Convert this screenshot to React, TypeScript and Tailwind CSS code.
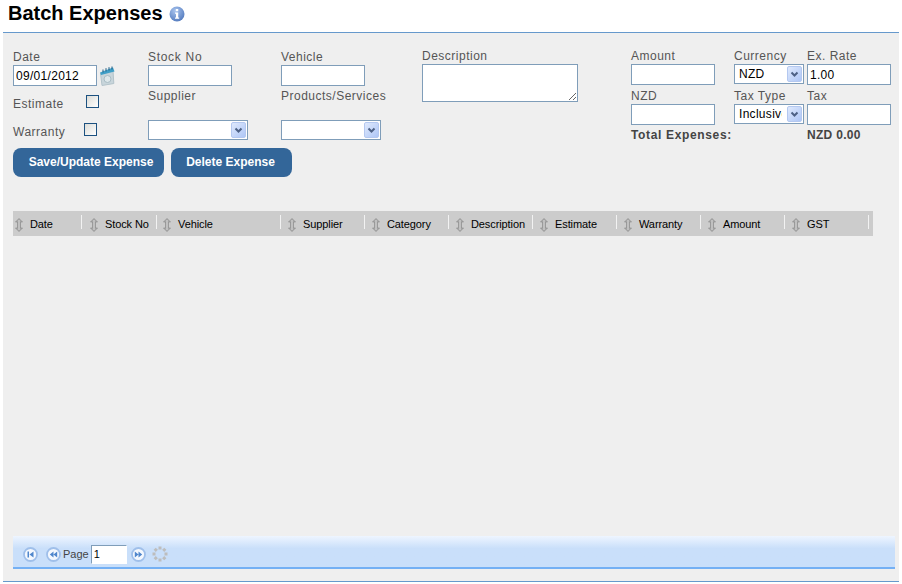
import React from 'react';

const font = "font-['Liberation_Sans',Arial,sans-serif]";
const label = 'block h-4 text-[12px] leading-4 tracking-[0.5px] text-[#555555] whitespace-nowrap';
const box = 'block h-[21px] w-[84px] border border-[#7f9db9] bg-white px-[2px] text-[12px] tracking-[0.3px] text-black outline-none';

const columns = [
  { name: 'Date', width: 'w-[69px]', inset: 'pl-[2px]' },
  { name: 'Stock No', width: 'w-[75px]', inset: 'pl-[8px]' },
  { name: 'Vehicle', width: 'w-[124px]', inset: 'pl-[6px]' },
  { name: 'Supplier', width: 'w-[84px]', inset: 'pl-[7px]' },
  { name: 'Category', width: 'w-[84px]', inset: 'pl-[7px]' },
  { name: 'Description', width: 'w-[84px]', inset: 'pl-[7px]' },
  { name: 'Estimate', width: 'w-[84px]', inset: 'pl-[7px]' },
  { name: 'Warranty', width: 'w-[84px]', inset: 'pl-[7px]' },
  { name: 'Amount', width: 'w-[84px]', inset: 'pl-[7px]' },
  { name: 'GST', width: 'w-[84px]', inset: 'pl-[7px]' },
];

const SelectBox = ({ value, width }: { value?: string; width: string }) => (
  <div className={`relative h-5 ${width}`}>
    <select
      defaultValue={value}
      className="block h-full w-full appearance-none rounded-none border border-[#7f9db9] bg-white pl-1 pr-[21px] text-[12px] tracking-[0.3px] text-black outline-none"
    >
      <option value={value ?? ''}>{value ?? ''}</option>
    </select>
    <span className="absolute right-[2px] top-[2px] flex h-4 w-[15px] items-center justify-center rounded-[2px] border border-[#b4c8f0] bg-gradient-to-br from-[#dfe9fc] to-[#aec6f6]">
      <svg width="9" height="7" viewBox="0 0 9 7">
        <path d="M1.5 1.5 4.5 4.5 7.5 1.5" fill="none" stroke="#4d6185" strokeWidth="2" />
      </svg>
    </span>
  </div>
);

const SortArrows = () => (
  <svg width="8" height="14" viewBox="0 0 8 14" className="shrink-0">
    <path d="M4 0.5 7.5 4H5.5V10H7.5L4 13.5 0.5 10H2.5V4H0.5Z" fill="#a8a8a8" stroke="#8c8c8c" strokeWidth="0.7" />
    <path d="M4 2V12" stroke="#d8d8d8" strokeWidth="1" />
  </svg>
);

const PagerButton = ({ kind }: { kind: 'first' | 'prev' | 'next' }) => (
  <svg width="15" height="15" viewBox="0 0 15 15" className="shrink-0">
    <circle cx="7.5" cy="7.5" r="6.5" fill="#f4f8fe" stroke="#9fbfea" strokeWidth="1.8" />
    {kind === 'first' && <path d="M4.5 4.5h1.5v6H4.5ZM10.5 4.5v6L6.5 7.5Z" fill="#4f86cc" />}
    {kind === 'prev' && <path d="M7.5 4.5v6L3.8 7.5ZM11.2 4.5v6L7.5 7.5Z" fill="#4f86cc" />}
    {kind === 'next' && <path d="M7.5 4.5v6l3.7-3ZM3.8 4.5v6l3.7-3Z" fill="#4f86cc" />}
  </svg>
);

const Spinner = () => (
  <svg width="16" height="16" viewBox="0 0 16 16" className="shrink-0">
    {[0, 45, 90, 135, 180, 225, 270, 315].map((deg) => (
      <rect key={deg} x="6.5" y="0.5" width="3" height="3" fill="#bdbdbd" transform={`rotate(${deg} 8 8)`} />
    ))}
  </svg>
);

const App: React.FC = () => {
  return (
    <div className={`flex h-[584px] w-[902px] flex-col bg-white ${font}`}>
      {/* Title */}
      <div className="flex h-[32px] items-start gap-[6px] pl-2 pt-[1px]">
        <h1 className="text-[20px] font-bold leading-[24px] text-black">Batch Expenses</h1>
        <svg width="16" height="16" viewBox="0 0 16 16" className="mt-[5px]">
          <defs>
            <radialGradient id="info" cx="40%" cy="30%" r="75%">
              <stop offset="0" stopColor="#a9c4ee" />
              <stop offset="1" stopColor="#5179bd" />
            </radialGradient>
          </defs>
          <circle cx="8" cy="8" r="7.5" fill="url(#info)" />
          <rect x="6.8" y="3" width="2.4" height="2.2" fill="#ffffff" />
          <path d="M6 6.5h3.2V11.5H10.2V12.8H6V11.5H7V7.8H6Z" fill="#ffffff" />
        </svg>
      </div>

      {/* Panel */}
      <div className="mx-[3px] mb-[2px] flex flex-1 flex-col border-y border-[#6699cc] bg-[#efefef] pl-[10px] pr-1">
        <div className="flex h-[115px] pt-[15px]">
          <div className="w-[135px] pt-px">
            <label className={label}>Date</label>
            <div className="flex items-start gap-[2px]">
              <input className={box} defaultValue="09/01/2012" readOnly />
              <svg width="16" height="20" viewBox="0 0 16 20" className="mt-px">
                <path d="M1.5 7.5 14 4.5 14.8 17.5 3 19.5Z" fill="#c8d5db" stroke="#b3c3ca" />
                <circle cx="8.5" cy="13" r="3.5" fill="#dde7ea" stroke="#a9bcc4" />
                <path d="M1 6.5 14 1.5 15.5 5.5 2 9Z" fill="#3f9fc7" />
                <path d="M4 6.5V3.5M7 5.5V2.2M10 4.5V1.2M13 3.5V0.5" stroke="#1f5f86" strokeWidth="1" />
              </svg>
            </div>
            <div className="mt-[9px] flex h-[13px] items-center">
              <span className="mt-[4px] w-[73px] text-[12px] tracking-[0.5px] text-[#555555]">Estimate</span>
              <input type="checkbox" className="h-[13px] w-[13px] appearance-none rounded-none border border-[#1c5180] bg-gradient-to-br from-[#dcdcd7] to-white" />
            </div>
            <div className="mt-[15px] flex h-[13px] items-center">
              <span className="mt-[4px] w-[71px] text-[12px] tracking-[0.5px] text-[#555555]">Warranty</span>
              <input type="checkbox" className="h-[13px] w-[13px] appearance-none rounded-none border border-[#1c5180] bg-gradient-to-br from-[#dcdcd7] to-white" />
            </div>
          </div>

          <div className="w-[133px] pt-px">
            <label className={`${label} tracking-[0.7px]`}>Stock No</label>
            <input className={box} />
            <label className={`${label} mt-[2px]`}>Supplier</label>
            <div className="mt-4">
              <SelectBox width="w-[100px]" />
            </div>
          </div>

          <div className="w-[141px] pt-px">
            <label className={label}>Vehicle</label>
            <input className={box} />
            <label className={`${label} mt-[2px]`}>Products/Services</label>
            <div className="mt-4">
              <SelectBox width="w-[100px]" />
            </div>
          </div>

          <div className="w-[209px]">
            <label className={label}>Description</label>
            <textarea className="block h-[38px] w-[156px] border border-[#7f9db9] bg-white text-[12px] outline-none" />
          </div>

          <div className="grid grid-cols-[103px_73px_84px] content-start">
            <label className={label}>Amount</label>
            <label className={label}>Currency</label>
            <label className={label}>Ex. Rate</label>
            <input className={box} />
            <SelectBox value="NZD" width="w-[70px]" />
            <input className={box} defaultValue="1.00" />
            <label className={`${label} mt-[3px]`}>NZD</label>
            <label className={`${label} mt-[3px]`}>Tax Type</label>
            <label className={`${label} mt-[3px]`}>Tax</label>
            <input className={box} />
            <SelectBox value="Inclusive" width="w-[70px]" />
            <input className={box} />
            <span className="col-span-2 mt-[3px] text-[12px] font-bold leading-[14px] tracking-[0.65px] text-[#444444]">Total Expenses:</span>
            <span className="mt-[3px] text-[12px] font-bold leading-[14px] tracking-[0.3px] text-[#444444]">NZD 0.00</span>
          </div>
        </div>

        {/* Buttons */}
        <div className="flex gap-[7px]">
          <button className="h-[29px] w-[151px] rounded-lg bg-[#336699] pb-[2px] pl-[5px] text-[12px] font-bold text-white">Save/Update Expense</button>
          <button className="h-[29px] w-[121px] rounded-lg bg-[#336699] pb-[2px] pr-[2px] text-[12px] font-bold text-white">Delete Expense</button>
        </div>

        {/* Grid header */}
        <div className="mt-[34px] flex h-[25px] w-[860px] items-center bg-[#cccccc] text-[11px] tracking-[-0.1px] text-black">
          {columns.map((col) => (
            <div key={col.name} className={`flex h-full items-center pt-[2px] ${col.inset} ${col.width}`}>
              <SortArrows />
              <span className="ml-[7px] flex-1 whitespace-nowrap">{col.name}</span>
              <span className="mb-[5px] h-[14px] w-px bg-[#f2f2f2]" />
            </div>
          ))}
        </div>

        {/* Pager */}
        <div className="mt-auto mb-3 flex h-[33px] w-[882px] items-center border-b-2 border-[#74b0f4] bg-gradient-to-b from-[#eef5ff] via-[#c9dffa] via-40% to-[#c9dffa] pl-[10px] pt-[5px] text-[11px] text-[#444444]">
          <PagerButton kind="first" />
          <span className="ml-2"><PagerButton kind="prev" /></span>
          <span className="ml-[2px]">Page</span>
          <input className="ml-[2px] h-[19px] w-[36px] border border-[#7f9db9] border-r-white border-b-white bg-white px-[2px] text-[11px] text-black outline-none" defaultValue="1" />
          <span className="ml-[4px]"><PagerButton kind="next" /></span>
          <span className="ml-[6px]"><Spinner /></span>
        </div>
      </div>
    </div>
  );
};

export default App;
